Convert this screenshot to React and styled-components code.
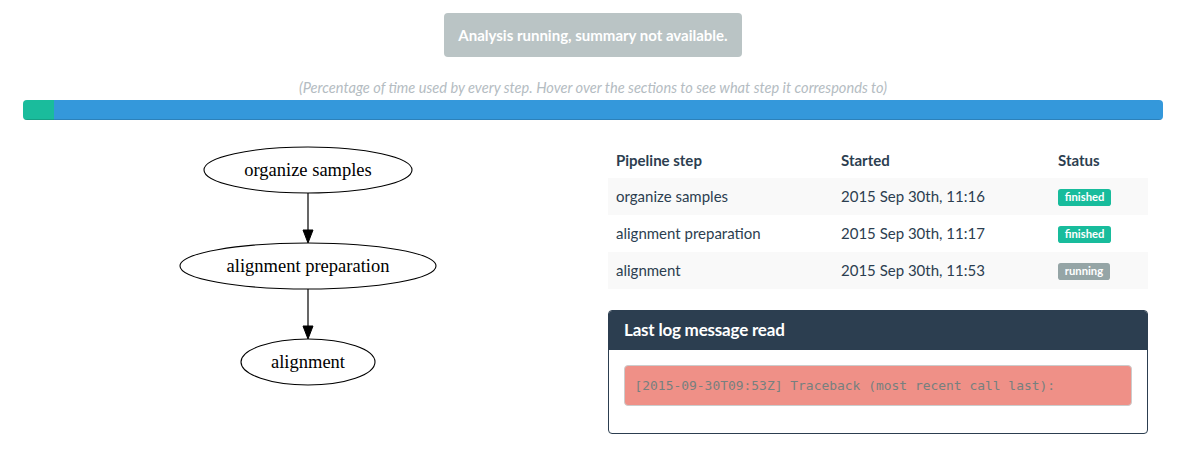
import React from "react";
import styled, { createGlobalStyle } from "styled-components";

const Global = createGlobalStyle`
  html, body { margin: 0; padding: 0; background: #fff; }
  body {
    font-family: Lato, "Noto Sans", "Liberation Sans", sans-serif;
    font-size: 15px;
    line-height: 1.42857;
    color: #2c3e50;
  }
  * { box-sizing: border-box; }
`;

const Page = styled.div`
  width: 1140px;
  margin: 0 0 0 23px;
  padding-top: 13px;
`;

const Center = styled.div`
  display: flex;
  justify-content: center;
`;

const StatusButton = styled.button`
  height: 44px;
  padding: 0 14.5px;
  border: none;
  border-radius: 4px;
  background: #bac4c5;
  color: #fff;
  font-family: Lato, "Noto Sans", sans-serif;
  font-weight: 700;
  font-size: 15px;
  cursor: not-allowed;
`;

const Caption = styled.p`
  margin: 21px 0 0;
  height: 20px;
  text-align: center;
  font-style: italic;
  font-size: 14.6px;
  line-height: 20px;
  color: #b4bcc2;
`;

const Progress = styled.div`
  display: flex;
  height: 20px;
  margin-top: 2px;
  border-radius: 4px;
  overflow: hidden;
  background: #ecf0f1;
`;

const Segment = styled.div`
  height: 100%;
  background: ${(p) => p.$color};
  box-shadow: inset 0 -1px 0 rgba(0, 0, 0, 0.15);
`;

const Row = styled.div`
  display: grid;
  grid-template-columns: 570px 540px;
  column-gap: 15px;
  margin-top: 20px;
`;

const GraphCol = styled.div`
  display: flex;
  justify-content: center;
`;

const Table = styled.table`
  width: 540px;
  border-collapse: collapse;
  margin-bottom: 21px;
`;

const Th = styled.th`
  text-align: left;
  font-weight: 700;
  height: 38px;
  line-height: 21px;
  padding: 10px 8px 7px;
  width: ${(p) => p.$w};
`;

const Tr = styled.tr`
  background: ${(p) => (p.$striped ? "#f9f9f9" : "transparent")};
`;

const Td = styled.td`
  height: 37px;
  padding: 8px;
  line-height: 21px;
  vertical-align: middle;
`;

const Badge = styled.span`
  display: inline-block;
  padding: 0.2em 0.6em 0.3em;
  font-size: 11.25px;
  font-weight: 700;
  line-height: 1;
  color: #fff;
  border-radius: 0.25em;
  background: ${(p) => (p.$status === "finished" ? "#18bc9c" : "#95a5a6")};
  position: relative;
  top: -1px;
`;

const Panel = styled.div`
  border: 1px solid #2c3e50;
  border-radius: 4px;
  overflow: hidden;
`;

const PanelHeading = styled.div`
  background: #2c3e50;
  color: #fff;
  height: 39px;
  padding: 0 15px;
  display: flex;
  align-items: center;
`;

const PanelTitle = styled.h3`
  margin: 0;
  font-size: 17px;
  font-weight: 700;
  letter-spacing: -0.2px;
`;

const PanelBody = styled.div`
  padding: 15px;
`;

const Pre = styled.pre`
  margin: 0 0 12px;
  padding: 9.5px;
  height: 41px;
  background: #ef9087;
  border: 1px solid #cccccc;
  border-radius: 4px;
  color: #76807f;
  font-family: "DejaVu Sans Mono", "Liberation Mono", monospace;
  font-size: 12.95px;
  line-height: 20px;
  white-space: pre;
  overflow: hidden;
`;

const steps = [
  { name: "organize samples", started: "2015 Sep 30th, 11:16", status: "finished" },
  { name: "alignment preparation", started: "2015 Sep 30th, 11:17", status: "finished" },
  { name: "alignment", started: "2015 Sep 30th, 11:53", status: "running" },
];

function Graph() {
  const nodes = [
    { label: "organize samples", cy: 30, rx: 104, ry: 23 },
    { label: "alignment preparation", cy: 126, rx: 128, ry: 23 },
    { label: "alignment", cy: 222, rx: 67, ry: 23 },
  ];
  const cx = 285;
  return (
    <svg width="570" height="250" viewBox="0 0 570 250">
      {nodes.slice(0, -1).map((n, i) => {
        const next = nodes[i + 1];
        const y1 = n.cy + n.ry;
        const y2 = next.cy - next.ry;
        return (
          <g key={"e" + i}>
            <line x1={cx} y1={y1} x2={cx} y2={y2 - 12} stroke="#000" strokeWidth="1.2" />
            <polygon points={`${cx - 5},${y2 - 13} ${cx + 5},${y2 - 13} ${cx},${y2}`} fill="#000" stroke="#000" strokeWidth="1" />
          </g>
        );
      })}
      {nodes.map((n) => (
        <g key={n.label}>
          <ellipse cx={cx} cy={n.cy} rx={n.rx} ry={n.ry} fill="none" stroke="#000" strokeWidth="1.1" />
          <text x={cx} y={n.cy + 6} textAnchor="middle" fontFamily='"Liberation Serif", "Times New Roman", serif' fontSize="18.5" fill="#000">
            {n.label}
          </text>
        </g>
      ))}
    </svg>
  );
}

export default function App() {
  return (
    <>
      <Global />
      <Page>
        <Center>
          <StatusButton disabled>Analysis running, summary not available.</StatusButton>
        </Center>
        <Caption>
          (Percentage of time used by every step. Hover over the sections to see what step it corresponds to)
        </Caption>
        <Progress>
          <Segment $color="#1abc9c" style={{ width: "2.72%" }} title="organize samples" />
          <Segment $color="#3498db" style={{ width: "97.28%" }} title="alignment preparation" />
        </Progress>
        <Row>
          <GraphCol>
            <Graph />
          </GraphCol>
          <div>
            <Table>
              <thead>
                <tr>
                  <Th $w="225px">Pipeline step</Th>
                  <Th $w="217px">Started</Th>
                  <Th $w="98px">Status</Th>
                </tr>
              </thead>
              <tbody>
                {steps.map((s, i) => (
                  <Tr key={s.name} $striped={i % 2 === 0}>
                    <Td>{s.name}</Td>
                    <Td>{s.started}</Td>
                    <Td>
                      <Badge $status={s.status}>{s.status}</Badge>
                    </Td>
                  </Tr>
                ))}
              </tbody>
            </Table>
            <Panel>
              <PanelHeading>
                <PanelTitle>Last log message read</PanelTitle>
              </PanelHeading>
              <PanelBody>
                <Pre>[2015-09-30T09:53Z] Traceback (most recent call last):</Pre>
              </PanelBody>
            </Panel>
          </div>
        </Row>
      </Page>
    </>
  );
}
